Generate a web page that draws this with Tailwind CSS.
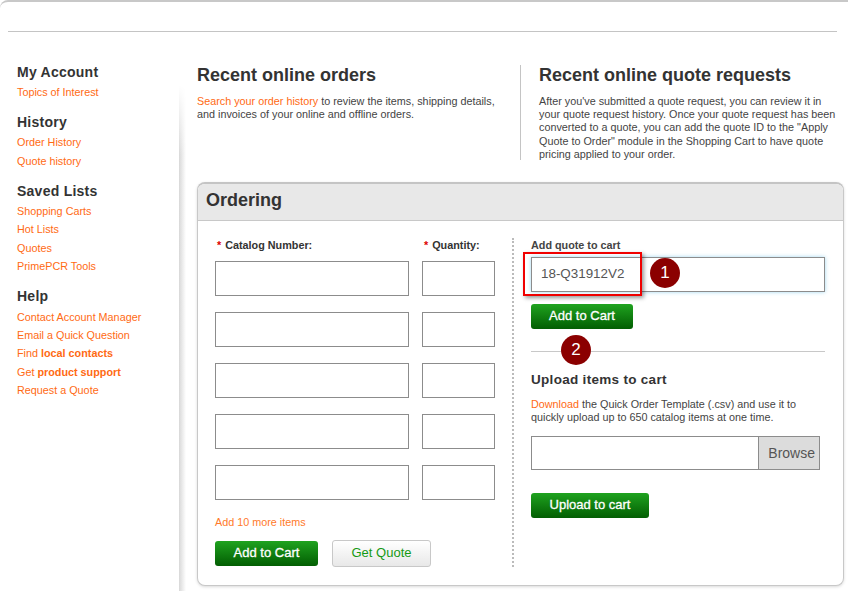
<!doctype html>
<html>
<head>
  <meta charset="UTF-8">
  <script src="https://cdn.jsdelivr.net/npm/@tailwindcss/browser@4"></script>
</head>
<body class="bg-white font-['Liberation_Sans',Arial,sans-serif] text-[#333]">
  <div class="relative h-[591px] w-[848px] overflow-hidden">
    <!-- top frame -->
    <div class="h-[31px] rounded-tl-[8px] border-t-2 border-[#c8c8c8]"></div>
    <div class="ml-2 mr-[11px] h-px bg-[#c4c4c4]"></div>

    <div class="flex">
      <!-- sidebar -->
      <div class="h-[560px] w-[180px] shrink-0 pl-[17px] pt-[31px]">
        <h3 class="text-[14px]/[18px] font-bold tracking-[0.25px]">My Account</h3>
        <a class="mt-[2px] block text-[10.8px]/[18px] text-[#ff6a13]">Topics of Interest</a>
        <h3 class="mt-[12px] text-[14px]/[18px] font-bold tracking-[0.25px]">History</h3>
        <a class="mt-[2px] block text-[10.8px]/[18px] text-[#ff6a13]">Order History</a>
        <a class="mt-px block text-[10.8px]/[18px] text-[#ff6a13]">Quote history</a>
        <h3 class="mt-[12px] text-[14px]/[18px] font-bold tracking-[0.25px]">Saved Lists</h3>
        <a class="mt-[2px] block text-[10.8px]/[18px] text-[#ff6a13]">Shopping Carts</a>
        <a class="block text-[10.8px]/[18px] text-[#ff6a13]">Hot Lists</a>
        <a class="mt-px block text-[10.8px]/[18px] text-[#ff6a13]">Quotes</a>
        <a class="block text-[10.8px]/[18px] text-[#ff6a13]">PrimePCR Tools</a>
        <h3 class="mt-[12px] text-[14px]/[18px] font-bold tracking-[0.25px]">Help</h3>
        <a class="mt-[3px] block text-[10.8px]/[18px] text-[#ff6a13]">Contact Account Manager</a>
        <a class="block text-[10.8px]/[18px] text-[#ff6a13]">Email a Quick Question</a>
        <a class="block text-[10.8px]/[18px] text-[#ff6a13]">Find <b>local contacts</b></a>
        <a class="mt-px block text-[10.8px]/[18px] text-[#ff6a13]">Get <b>product support</b></a>
        <a class="block text-[10.8px]/[18px] text-[#ff6a13]">Request a Quote</a>
      </div>

      <!-- main -->
      <div class="ml-[17px] w-[647px] shrink-0">
        <div class="flex h-[150px] pt-[32px]">
          <div class="w-[323px] pr-[24px]">
            <h2 class="text-[18px]/[22px] font-bold">Recent online orders</h2>
            <p class="mt-[9px] text-[10.8px]/[13px] text-[#444]"><a class="text-[#ff6a13]">Search your order history</a> to review the items, shipping details, and invoices of your online and offline orders.</p>
          </div>
          <div class="mt-px h-[95px] w-px bg-[#c4c4c4]"></div>
          <div class="flex-1 pl-[18px]">
            <h2 class="text-[18px]/[22px] font-bold">Recent online quote requests</h2>
            <p class="mt-[9px] w-[298px] text-[10.8px]/[13.2px] text-[#444]">After you've submitted a quote request, you can review it in your quote request history. Once your quote request has been converted to a quote, you can add the quote ID to the "Apply Quote to Order" module in the Shopping Cart to have quote pricing applied to your order.</p>
          </div>
        </div>

        <!-- Ordering card -->
        <div class="h-[404px] overflow-hidden rounded-[8px] border-x border-b border-t-[2px] border-[#c8c8c8] border-t-[#c4c4c4] bg-white shadow-[0_1px_3px_rgba(0,0,0,0.15)]">
          <div class="h-[37px] border-b border-[#c8c8c8] bg-[#e8e8e8] pl-[8px] text-[18px]/[32px] font-bold">Ordering</div>
          <div class="flex pt-[17px]">
            <div class="w-[314px] pl-[17px]">
              <div class="flex text-[10.8px]/[15px] font-bold">
                <div class="w-[207px] pl-[2px]"><span class="mr-[4px] text-[#d00]">*</span>Catalog Number:</div>
                <div class="pl-[2px]"><span class="mr-[4px] text-[#d00]">*</span>Quantity:</div>
              </div>
              <div class="mt-[8px] flex flex-col gap-[16px]">
                <div class="flex gap-[13px]"><div class="h-[35px] w-[194px] border border-[#8c8c8c]"></div><div class="h-[35px] w-[73px] border border-[#8c8c8c]"></div></div>
                <div class="flex gap-[13px]"><div class="h-[35px] w-[194px] border border-[#8c8c8c]"></div><div class="h-[35px] w-[73px] border border-[#8c8c8c]"></div></div>
                <div class="flex gap-[13px]"><div class="h-[35px] w-[194px] border border-[#8c8c8c]"></div><div class="h-[35px] w-[73px] border border-[#8c8c8c]"></div></div>
                <div class="flex gap-[13px]"><div class="h-[35px] w-[194px] border border-[#8c8c8c]"></div><div class="h-[35px] w-[73px] border border-[#8c8c8c]"></div></div>
                <div class="flex gap-[13px]"><div class="h-[35px] w-[194px] border border-[#8c8c8c]"></div><div class="h-[35px] w-[73px] border border-[#8c8c8c]"></div></div>
              </div>
              <a class="mt-[15px] block text-[10.8px]/[15px] text-[#ff7a2a]">Add 10 more items</a>
              <div class="mt-[10px] flex items-center gap-[14px]">
                <button class="h-[25px] w-[103px] rounded-[3px] bg-gradient-to-b from-[#1fa31f] to-[#035e03] pb-[2px] text-[13px] text-white [-webkit-text-stroke:0.3px_white]">Add to Cart</button>
                <button class="h-[27px] w-[99px] rounded-[3px] border border-[#c8c8c8] bg-gradient-to-b from-white to-[#e8e8e8] pb-[2px] text-[13px] text-[#159a15]">Get Quote</button>
              </div>
            </div>
            <div class="h-[329px] border-l-2 border-dotted border-[#bbb]"></div>
            <div class="pl-[17px]">
              <div class="text-[10.8px]/[15px] font-bold text-[#444]">Add quote to cart</div>
              <div class="mt-[4px] h-[35px] w-[294px] border border-[#8c8c8c] pl-[9px] text-[13.4px]/[32px] text-[#555] shadow-[0_0_4px_rgba(120,200,235,0.7)]">18-Q31912V2</div>
              <button class="mt-[12px] block h-[25px] w-[102px] rounded-[3px] bg-gradient-to-b from-[#1fa31f] to-[#035e03] pb-[2px] text-[13px] text-white [-webkit-text-stroke:0.3px_white]">Add to Cart</button>
              <div class="mt-[22px] h-px w-[294px] bg-[#c8c8c8]"></div>
              <h3 class="mt-[19px] text-[13.5px]/[18px] font-bold tracking-[0.3px]">Upload items to cart</h3>
              <p class="mt-[9px] w-[285px] text-[10.8px]/[13px] text-[#444]"><a class="text-[#ff6a13]">Download</a> the Quick Order Template (.csv) and use it to quickly upload up to 650 catalog items at one time.</p>
              <div class="mt-[12px] flex h-[34px] w-[289px] border border-[#8c8c8c]">
                <div class="flex-1"></div>
                <div class="w-[61px] border-l border-[#8c8c8c] bg-[#dcdcdc] pr-[4px] text-right text-[14px]/[32px] text-[#555]">Browse</div>
              </div>
              <button class="mt-[23px] block h-[25px] w-[118px] rounded-[3px] bg-gradient-to-b from-[#1fa31f] to-[#035e03] pb-[2px] text-[13px] text-white [-webkit-text-stroke:0.3px_white]">Upload to cart</button>
            </div>
          </div>
        </div>
      </div>
    </div>

    <!-- soft shadow right of the sidebar, fades in from the top -->
    <div class="absolute left-[179px] top-[85px] h-[506px] w-[7px] bg-gradient-to-r from-[#d8d8d8] to-white [mask-image:linear-gradient(to_bottom,transparent,black_70px)]"></div>

    <!-- annotations laid over the screenshot -->
    <div class="absolute left-[523px] top-[252px] h-[44px] w-[119px] border-[2px] border-[#f00000] shadow-[2px_2px_4px_rgba(0,0,0,0.4)]"></div>
    <div class="absolute left-[650px] top-[258px] flex h-[30px] w-[30px] items-center justify-center rounded-full bg-[#8b0000] text-[17px] text-white">1</div>
    <div class="absolute left-[561px] top-[335px] flex h-[30px] w-[30px] items-center justify-center rounded-full bg-[#8b0000] text-[17px] text-white">2</div>
  </div>
</body>
</html>
